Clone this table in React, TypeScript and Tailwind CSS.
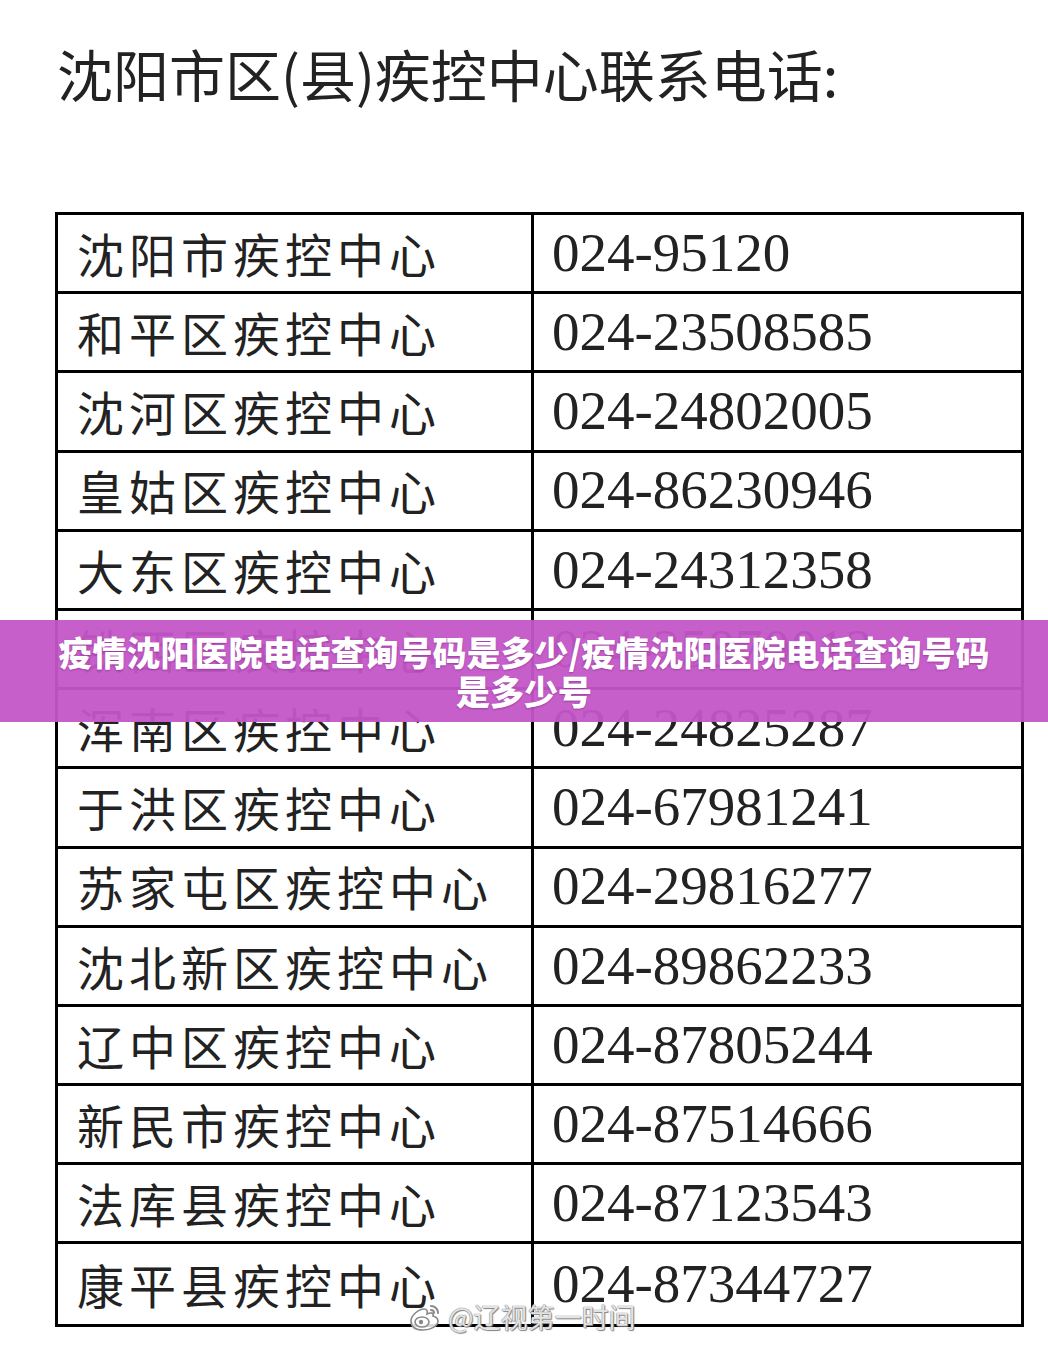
const rows: [string, string][] = [
  ["沈阳市疾控中心", "024-95120"],
  ["和平区疾控中心", "024-23508585"],
  ["沈河区疾控中心", "024-24802005"],
  ["皇姑区疾控中心", "024-86230946"],
  ["大东区疾控中心", "024-24312358"],
  ["铁西区疾控中心", "024-25870012"],
  ["浑南区疾控中心", "024-24825287"],
  ["于洪区疾控中心", "024-67981241"],
  ["苏家屯区疾控中心", "024-29816277"],
  ["沈北新区疾控中心", "024-89862233"],
  ["辽中区疾控中心", "024-87805244"],
  ["新民市疾控中心", "024-87514666"],
  ["法库县疾控中心", "024-87123543"],
  ["康平县疾控中心", "024-87344727"],
];

const cjk = { fontFamily: '"Noto Sans CJK SC", "Noto Sans", sans-serif' };
const serif = { fontFamily: '"Liberation Serif", "DejaVu Serif", serif' };

function WeiboLogo() {
  return (
    <svg width="34" height="30" viewBox="0 0 34 30" className="shrink-0">
      <g fill="rgba(255,255,255,0.85)" stroke="#8a8a8a" strokeWidth="1.6">
        <path d="M3 19c0-6 8-12 13-12 3 0 4 2 3 5 4-2 7-1 6 2 3 1 5 3 5 5 0 5-7 9-15 9S3 25 3 19z" />
        <ellipse cx="14" cy="20" rx="7" ry="5" />
        <circle cx="13" cy="20" r="2.2" fill="#8a8a8a" stroke="none" />
      </g>
      <g fill="none" stroke="#8a8a8a" strokeWidth="2" strokeLinecap="round">
        <path d="M23 4c4 0 7 3 7 7" />
        <path d="M23 8c2 0 3 1 3 3" />
      </g>
    </svg>
  );
}

export default function App() {
  return (
    <div className="relative w-[1048px] h-[1346px] bg-white overflow-hidden text-[#222]">
      <h1
        className="pl-[57px] pt-[33px] text-[56px] leading-[80px] font-normal whitespace-nowrap"
        style={cjk}
      >
        沈阳市区(县)疾控中心联系电话:
      </h1>

      <div className="ml-[55px] mt-[99px] w-[969px] border-[3px] border-black">
        {rows.map(([name, phone], i) => (
          <div
            key={name}
            className={`flex h-[79.2px] ${i < rows.length - 1 ? "border-b-[3px] border-black" : ""}`}
          >
            <div
              className="w-[476px] border-r-[3px] border-black flex items-center pl-[19px] text-[47px] tracking-[5px] whitespace-nowrap"
              style={cjk}
            >
              {name}
            </div>
            <div className="flex-1 flex items-center pl-[18px] text-[55px] text-[#222]" style={serif}>
              {phone}
            </div>
          </div>
        ))}
      </div>

      <div
        className="absolute left-0 right-0 top-[620px] h-[102px] bg-[#c456c8]/95 flex flex-col items-center justify-center text-white text-[34px] leading-[39px] font-black [text-shadow:0_1px_2px_rgba(80,0,80,0.35)]"
        style={cjk}
      >
        <div className="whitespace-nowrap">疫情沈阳医院电话查询号码是多少/疫情沈阳医院电话查询号码</div>
        <div>是多少号</div>
      </div>

      <div className="absolute left-[408px] top-[1302px] flex items-center gap-[6px]">
        <WeiboLogo />
        <span
          className="text-[27px] leading-[30px] text-white/80 [text-shadow:0_0_1px_#777,0_0_1px_#777,1px_1px_1px_#888]"
          style={cjk}
        >
          @辽视第一时间
        </span>
      </div>
    </div>
  );
}
